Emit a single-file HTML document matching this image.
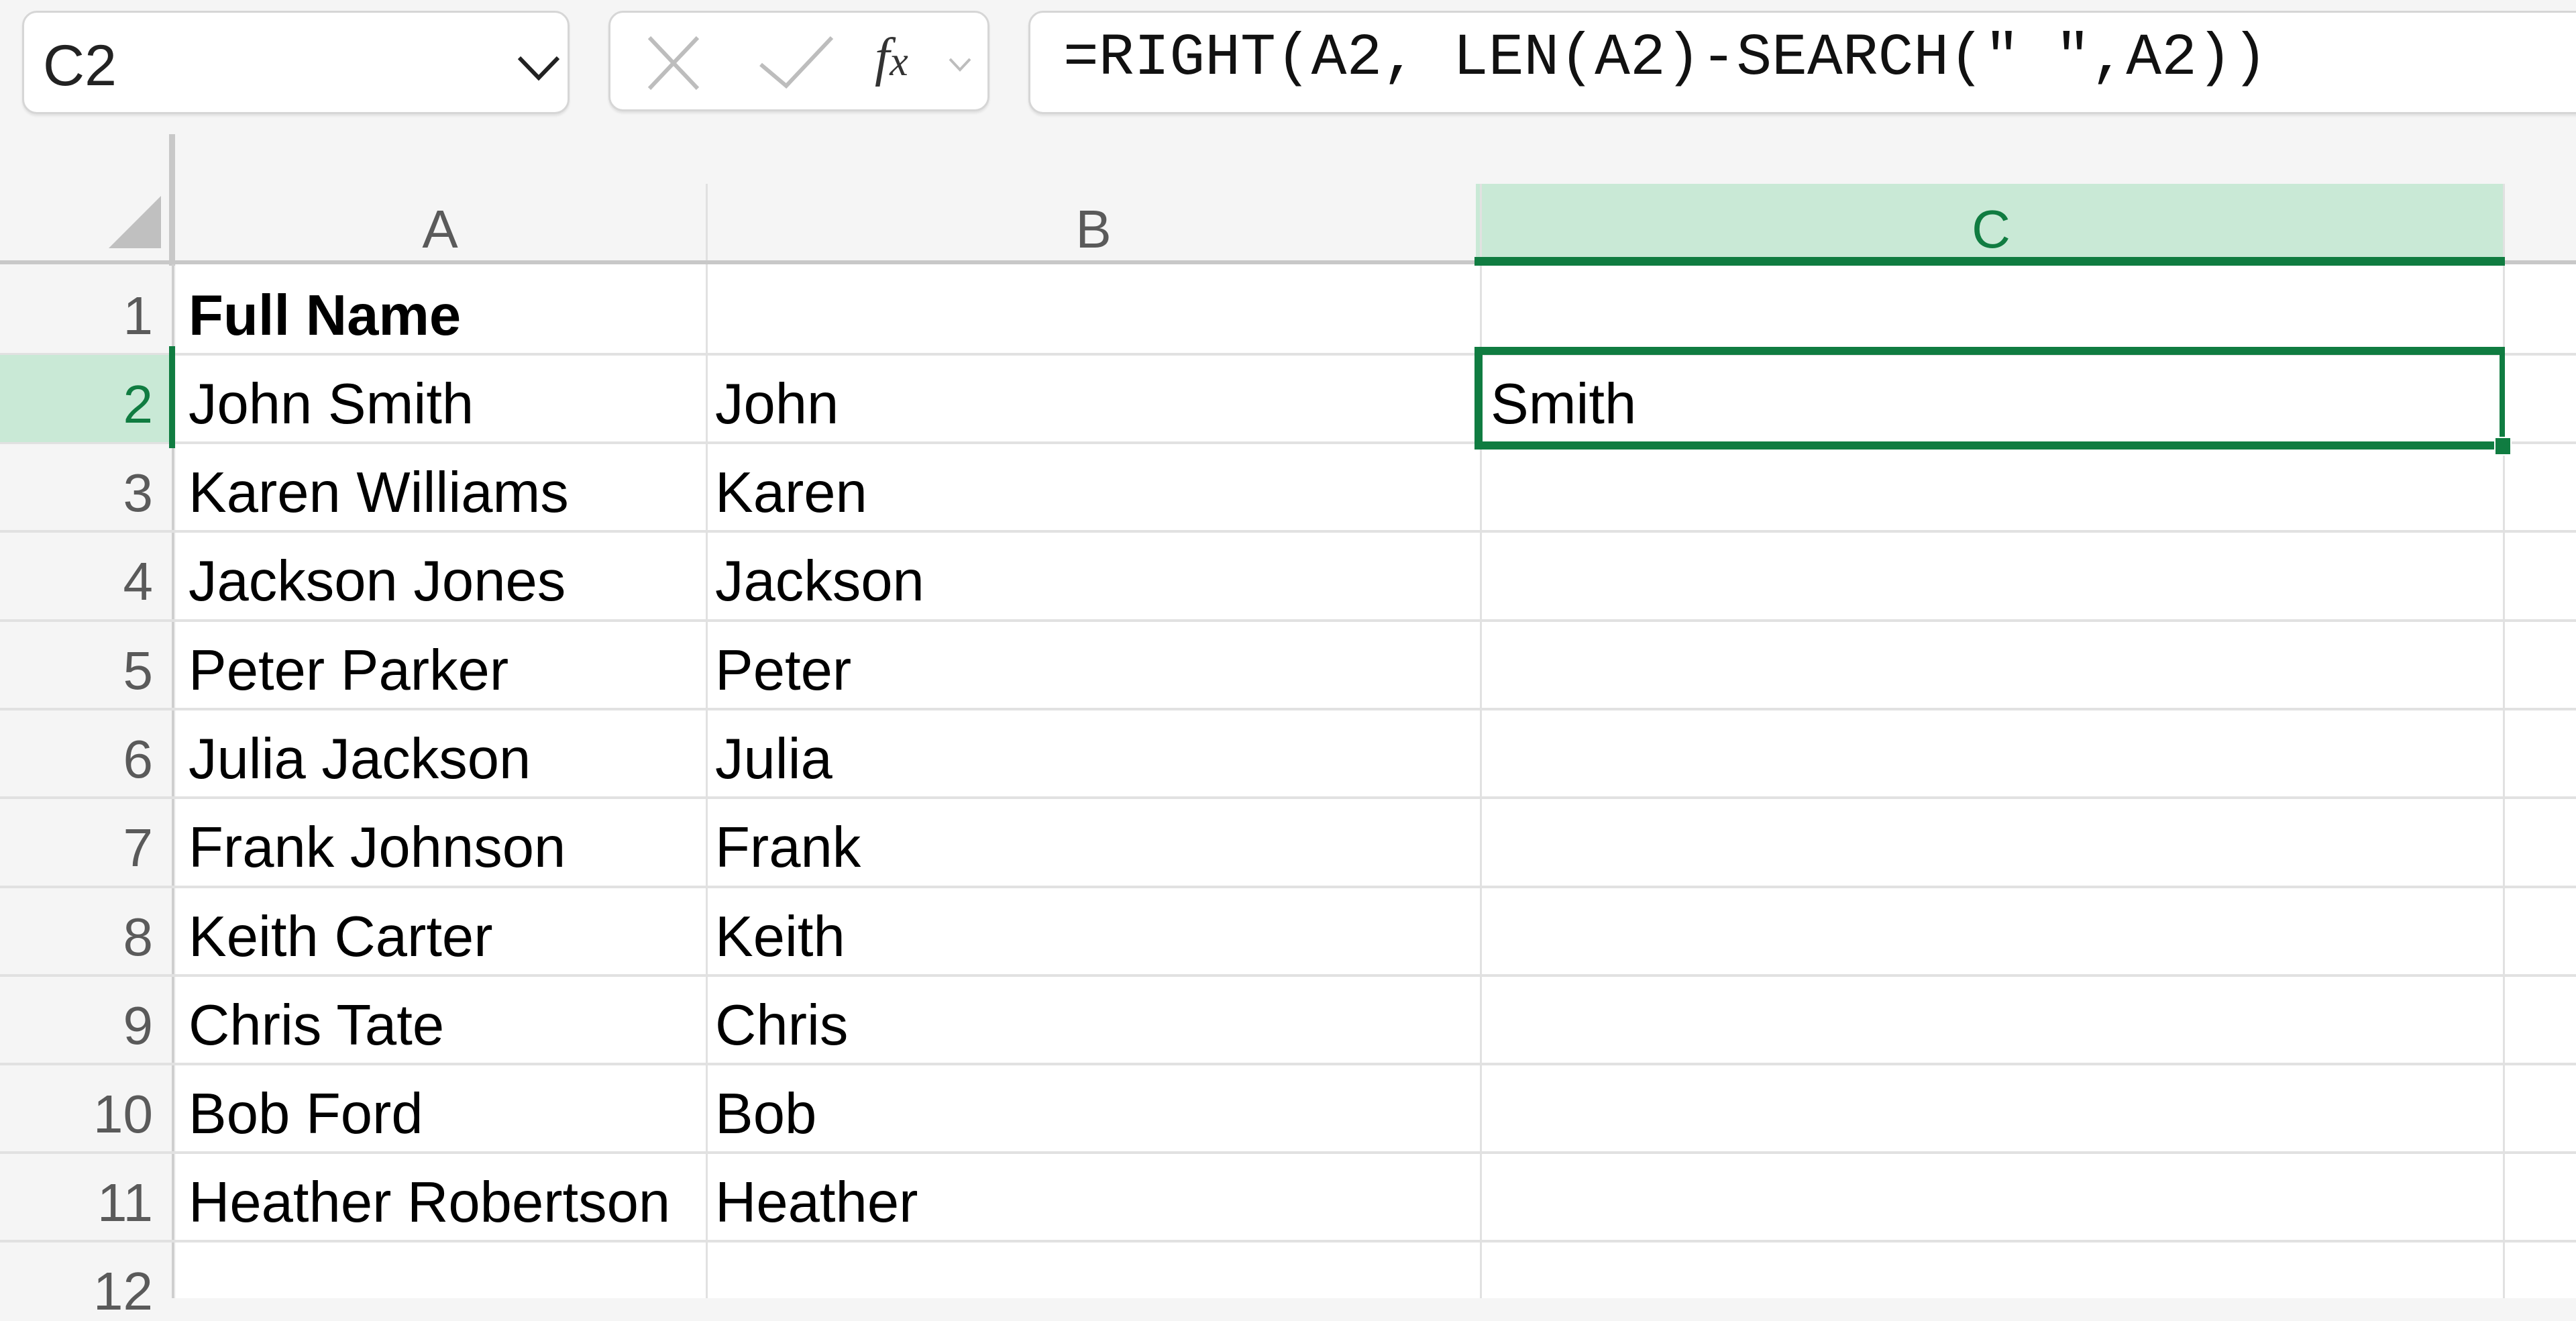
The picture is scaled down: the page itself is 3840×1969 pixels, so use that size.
<!DOCTYPE html>
<html><head><meta charset="utf-8"><style>
*{margin:0;padding:0;box-sizing:border-box}
body{width:3840px;height:1935px;overflow:hidden;background:#f5f5f5;font-family:"Liberation Sans",sans-serif;position:relative}
.abs{position:absolute}
.box{position:absolute;background:#fff;border:3px solid #d6d6d6;border-radius:22px;box-shadow:0 3px 3px rgba(0,0,0,.08)}
.hl{position:absolute;height:4px;background:#e1e1e1}
.vl{position:absolute;width:3px;background:#e1e1e1}
.cell{position:absolute;font-size:85px;color:#000;line-height:1;white-space:nowrap}
.rn{position:absolute;left:0;width:228px;text-align:right;font-size:80px;color:#5a5a5a;line-height:1}
.ch{position:absolute;font-size:80px;color:#5a5a5a;line-height:1;text-align:center}
</style></head><body>
<!-- name box -->
<div class="box" style="left:33px;top:16px;width:816px;height:154px"></div>
<div class="abs" style="left:64px;top:55px;font-size:86px;line-height:1;color:#222">C2</div>
<svg class="abs" style="left:768px;top:78px" width="70" height="46"><path d="M6 8 L35 38 L64 8" fill="none" stroke="#222" stroke-width="6"/></svg>
<!-- fx box -->
<div class="box" style="left:907px;top:16px;width:568px;height:150px"></div>
<svg class="abs" style="left:960px;top:50px" width="90" height="90"><path d="M8 6 L80 82 M80 6 L8 82" stroke="#bdbdbd" stroke-width="6" fill="none"/></svg>
<svg class="abs" style="left:1128px;top:50px" width="120" height="84"><path d="M6 46 L44 78 L112 6" stroke="#bdbdbd" stroke-width="6" fill="none"/></svg>
<div class="abs" style="left:1304px;top:46px;font-size:80px;font-style:italic;font-family:'Liberation Serif',serif;color:#333;line-height:1">f<span style="font-size:62px">x</span></div>
<svg class="abs" style="left:1412px;top:84px" width="40" height="26"><path d="M4 4 L19 20 L34 4" stroke="#bdbdbd" stroke-width="4" fill="none"/></svg>
<!-- formula bar -->
<div class="box" style="left:1533px;top:16px;width:2400px;height:154px"></div>
<div class="abs" style="left:1585px;top:44px;font-family:'Liberation Mono',monospace;font-size:88px;line-height:1;color:#111">=RIGHT(A2, LEN(A2)-SEARCH(" ",A2))</div>
<!-- grid white area -->
<div class="abs" style="left:262px;top:393px;width:3578px;height:1542px;background:#fff"></div>
<!-- header C highlight -->
<div class="abs" style="left:2200px;top:274px;width:1534px;height:116px;background:#c9e9d6"></div>
<!-- header vertical lines -->
<div class="vl" style="left:1052px;top:274px;height:1661px"></div>
<div class="vl" style="left:2206px;top:274px;height:1661px"></div>
<div class="vl" style="left:3731px;top:274px;height:1661px"></div>
<!-- corner vertical line -->
<div class="abs" style="left:252px;top:200px;width:9px;height:196px;background:#c8c8c8"></div>
<div class="abs" style="left:256px;top:393px;width:4px;height:1542px;background:#cfcfcf"></div>
<svg class="abs" style="left:160px;top:290px" width="82" height="82"><path d="M80 2 L80 80 L2 80 Z" fill="#c0c0c0"/></svg>
<!-- header bottom line -->
<div class="abs" style="left:0;top:388px;width:3840px;height:6px;background:#c8c8c8"></div>
<div class="abs" style="left:2198px;top:383px;width:1536px;height:13px;background:#107c41"></div>
<!-- column letters -->
<div class="ch" style="left:556px;top:302px;width:200px">A</div>
<div class="ch" style="left:1530px;top:302px;width:200px">B</div>
<div class="ch" style="left:2868px;top:302px;width:200px;color:#107c41">C</div>
<!-- row lines -->
<div class="hl" style="left:0;top:526px;width:3840px"></div>
<div class="hl" style="left:0;top:658px;width:3840px"></div>
<div class="hl" style="left:0;top:790px;width:3840px"></div>
<div class="hl" style="left:0;top:923px;width:3840px"></div>
<div class="hl" style="left:0;top:1055px;width:3840px"></div>
<div class="hl" style="left:0;top:1187px;width:3840px"></div>
<div class="hl" style="left:0;top:1320px;width:3840px"></div>
<div class="hl" style="left:0;top:1452px;width:3840px"></div>
<div class="hl" style="left:0;top:1584px;width:3840px"></div>
<div class="hl" style="left:0;top:1716px;width:3840px"></div>
<div class="hl" style="left:0;top:1848px;width:3840px"></div>
<!-- row 2 header highlight -->
<div class="abs" style="left:0;top:529px;width:254px;height:130px;background:#c9e9d6"></div>
<div class="abs" style="left:252px;top:516px;width:9px;height:152px;background:#107c41"></div>
<!-- row numbers -->
<div class="rn" style="top:431px">1</div>
<div class="rn" style="top:563px;color:#107c41">2</div>
<div class="rn" style="top:695px">3</div>
<div class="rn" style="top:827px">4</div>
<div class="rn" style="top:960px">5</div>
<div class="rn" style="top:1092px">6</div>
<div class="rn" style="top:1224px">7</div>
<div class="rn" style="top:1357px">8</div>
<div class="rn" style="top:1489px">9</div>
<div class="rn" style="top:1621px">10</div>
<div class="rn" style="top:1753px">11</div>
<div class="rn" style="top:1885px">12</div>
<!-- cells A -->
<div class="cell" style="left:281px;top:428px;font-weight:bold">Full Name</div>
<div class="cell" style="left:281px;top:560px">John Smith</div>
<div class="cell" style="left:281px;top:692px">Karen Williams</div>
<div class="cell" style="left:281px;top:824px">Jackson Jones</div>
<div class="cell" style="left:281px;top:957px">Peter Parker</div>
<div class="cell" style="left:281px;top:1089px">Julia Jackson</div>
<div class="cell" style="left:281px;top:1221px">Frank Johnson</div>
<div class="cell" style="left:281px;top:1354px">Keith Carter</div>
<div class="cell" style="left:281px;top:1486px">Chris Tate</div>
<div class="cell" style="left:281px;top:1618px">Bob Ford</div>
<div class="cell" style="left:281px;top:1750px">Heather Robertson</div>
<!-- cells B -->
<div class="cell" style="left:1066px;top:560px">John</div>
<div class="cell" style="left:1066px;top:692px">Karen</div>
<div class="cell" style="left:1066px;top:824px">Jackson</div>
<div class="cell" style="left:1066px;top:957px">Peter</div>
<div class="cell" style="left:1066px;top:1089px">Julia</div>
<div class="cell" style="left:1066px;top:1221px">Frank</div>
<div class="cell" style="left:1066px;top:1354px">Keith</div>
<div class="cell" style="left:1066px;top:1486px">Chris</div>
<div class="cell" style="left:1066px;top:1618px">Bob</div>
<div class="cell" style="left:1066px;top:1750px">Heather</div>
<!-- selected C2 -->
<div class="abs" style="left:2198px;top:517px;width:1536px;height:153px;border:12px solid #107c41;border-right-width:8px"></div>
<div class="abs" style="left:3718px;top:651px;width:26px;height:28px;background:#107c41;border:2px solid #fff"></div>
<div class="cell" style="left:2222px;top:560px">Smith</div>
</body></html>
